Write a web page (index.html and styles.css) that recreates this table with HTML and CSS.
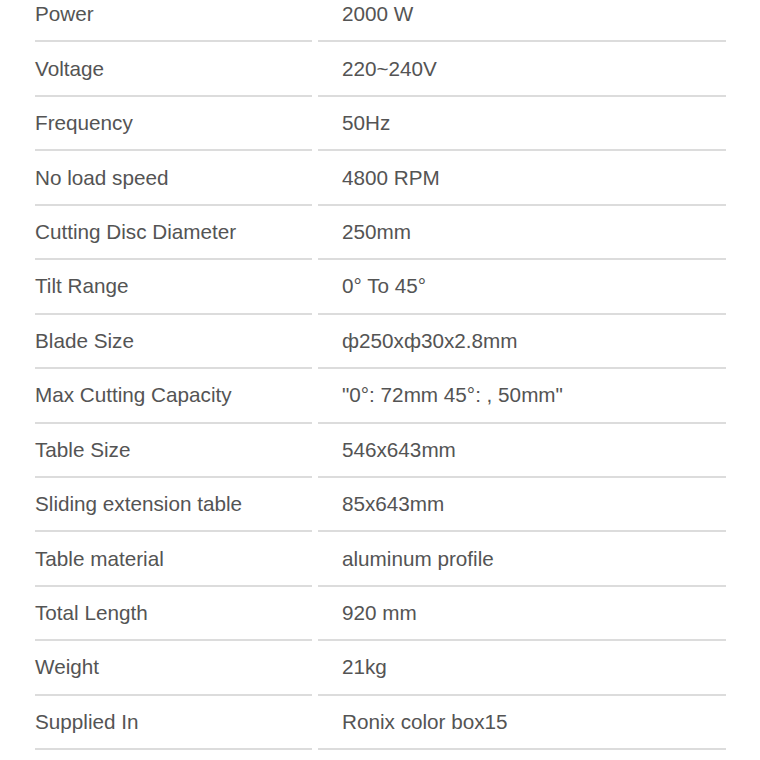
FILE: index.html
```html
<!DOCTYPE html>
<html>
<head>
<meta charset="utf-8">
<link rel="stylesheet" href="styles.css">
</head>
<body>
<div class="specs">
  <div class="cell label">Power</div><div class="cell value">2000 W</div>
  <div class="cell label">Voltage</div><div class="cell value">220~240V</div>
  <div class="cell label">Frequency</div><div class="cell value">50Hz</div>
  <div class="cell label">No load speed</div><div class="cell value">4800 RPM</div>
  <div class="cell label">Cutting Disc Diameter</div><div class="cell value">250mm</div>
  <div class="cell label">Tilt Range</div><div class="cell value">0° To 45°</div>
  <div class="cell label">Blade Size</div><div class="cell value">ф250xф30x2.8mm</div>
  <div class="cell label">Max Cutting Capacity</div><div class="cell value">"0°: 72mm 45°: , 50mm"</div>
  <div class="cell label">Table Size</div><div class="cell value">546x643mm</div>
  <div class="cell label">Sliding extension table</div><div class="cell value">85x643mm</div>
  <div class="cell label">Table material</div><div class="cell value">aluminum profile</div>
  <div class="cell label">Total Length</div><div class="cell value">920 mm</div>
  <div class="cell label">Weight</div><div class="cell value">21kg</div>
  <div class="cell label">Supplied In</div><div class="cell value">Ronix color box15</div>
</div>
</body>
</html>
```
FILE: styles.css
```css
html, body {
  margin: 0;
  padding: 0;
  background: #fff;
}
body {
  font-family: "Liberation Sans", Arial, sans-serif;
  color: #545454;
  overflow: hidden;
}
.specs {
  display: grid;
  grid-template-columns: 277px 408px;
  column-gap: 6px;
  margin-top: -12px;
  padding-left: 35px;
}
.cell {
  height: 52.45px;
  border-bottom: 2px solid #dcdcdc;
  display: flex;
  align-items: center;
  font-size: 20.7px;
  white-space: nowrap;
}
.value {
  padding-left: 24px;
}
```
